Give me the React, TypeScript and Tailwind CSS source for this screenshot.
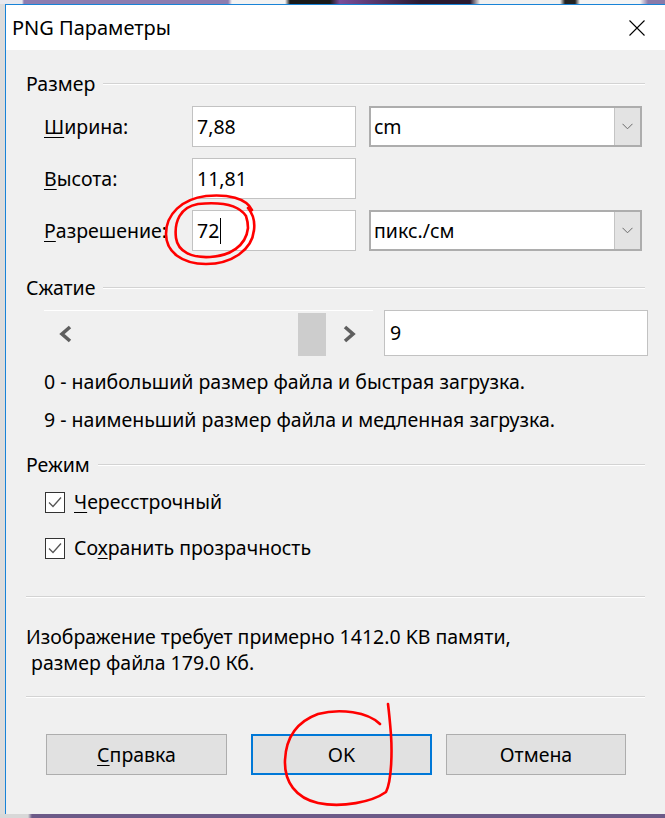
import React from 'react';

function Heading({ title }: { title: string }) {
  return (
    <div className="flex h-[24px] items-center">
      <span>{title}</span>
      <div className="ml-[8px] h-0 flex-1 border-t border-b border-t-[#d3d3d3] border-b-white" />
    </div>
  );
}

function Chevron() {
  return (
    <svg width="11" height="7" viewBox="0 0 11 7">
      <path d="M0.5 0.8 L5.5 5.8 L10.5 0.8" fill="none" stroke="#6a6a6a" strokeWidth="1" />
    </svg>
  );
}

function Combo({ value }: { value: string }) {
  return (
    <div className="flex h-[41px] items-stretch border-2 border-[#adadad] bg-white">
      <span className="flex flex-1 items-center pl-[3px]">{value}</span>
      <div className="flex w-[26px] items-center justify-center border-l border-[#c4c4c4] bg-[#e3e3e3]">
        <Chevron />
      </div>
    </div>
  );
}

function Field({ value, caret }: { value: string; caret?: boolean }) {
  return (
    <div className="flex h-[41px] items-center border border-[#c2c2c2] bg-white pl-[4px]">
      <span>{value}</span>
      {caret && <span className="ml-[1px] h-[26px] w-px bg-black" />}
    </div>
  );
}

function Check({ first, rest }: { first: React.ReactNode; rest: string }) {
  return (
    <div className="flex h-[24px] items-center">
      <div className="flex h-[21px] w-[20px] items-center justify-center border border-[#333] bg-white">
        <svg width="14" height="12" viewBox="0 0 14 12">
          <path d="M1 6.5 L5 10.5 L13 1.5" fill="none" stroke="#555" strokeWidth="1.3" />
        </svg>
      </div>
      <span className="ml-[9px]">
        {first}
        {rest}
      </span>
    </div>
  );
}

export default function App() {
  return (
    <div className="relative flex h-[818px] w-[665px] flex-col overflow-hidden bg-[#e4e4e4] font-['Noto_Sans',sans-serif] text-[19.5px] text-black">
      {/* desktop behind the dialog */}
      <div className="h-[4px] bg-[linear-gradient(90deg,#e8e8ee_0px,#e8e8ee_22px,#8d7db0_24px,#8d7db0_228px,#f2f2f2_232px,#f2f2f2_285px,#1a1a1a_290px,#1a1a1a_330px,#7a4d9a_340px,#2a1a30_420px,#2a1a30_470px,#f0f0f0_480px,#f0f0f0_560px,#222_565px,#222_575px,#f4f4f4_580px,#f4f4f4_640px,#8a7aa8_648px)]" />
      <div className="flex flex-1">
        <div className="w-[5px] bg-[#dcdcdc]" />
        <div className="flex flex-1 flex-col border-l border-t border-[#1883d7]">
          {/* title bar */}
          <div className="flex h-[45px] items-center bg-white pl-[6px] pr-[20px]">
            <span className="text-[20px]">PNG Параметры</span>
            <div className="flex-1" />
            <svg width="16" height="16" viewBox="0 0 16 16">
              <path d="M0.5 0.5 L15.5 15.5 M15.5 0.5 L0.5 15.5" stroke="#000" strokeWidth="1.1" />
            </svg>
          </div>

          {/* body */}
          <div className="flex flex-1 flex-col bg-[#f0f0f0] pl-[20px] pr-[20px] pt-[22px]">
            <Heading title="Размер" />
            <div className="ml-[18px] mr-[3px] mt-[10px] grid grid-cols-[135px_164px_1fr] gap-x-[13px] gap-y-[11px]">
              <div className="flex items-center">
                <span className="underline underline-offset-[3px]">Ш</span>ирина:
              </div>
              <Field value="7,88" />
              <Combo value="cm" />

              <div className="flex items-center">
                <span className="underline underline-offset-[3px]">В</span>ысота:
              </div>
              <Field value="11,81" />
              <div />

              <div className="flex items-center whitespace-nowrap">
                <span className="underline underline-offset-[3px]">Р</span>азрешение:
              </div>
              <Field value="72" caret />
              <Combo value="пикс./см" />
            </div>

            <div className="mt-[25px]">
              <Heading title="Сжатие" />
            </div>
            <div className="ml-[18px] mr-[-3px] mt-[10px] flex">
              <div className="flex h-[46px] w-[329px] items-center border-t border-white">
                <div className="ml-[13px] w-[17px]">
                  <svg width="17" height="18" viewBox="0 0 17 18">
                    <path d="M13 2 L5 9 L13 16" fill="none" stroke="#5f5f5f" strokeWidth="3.6" />
                  </svg>
                </div>
                <div className="flex-1" />
                <div className="h-[43px] w-[28px] self-end bg-[#cdcdcd]" />
                <div className="ml-[15px] w-[17px]">
                  <svg width="17" height="18" viewBox="0 0 17 18">
                    <path d="M4 2 L12 9 L4 16" fill="none" stroke="#5f5f5f" strokeWidth="3.6" />
                  </svg>
                </div>
                <div className="w-[15px]" />
              </div>
              <div className="ml-[11px] flex h-[46px] flex-1 items-center border border-[#c2c2c2] bg-white pl-[5px]">9</div>
            </div>
            <div className="ml-[18px] mt-[14px] flex h-[24px] items-center">0 - наибольший размер файла и быстрая загрузка.</div>
            <div className="ml-[18px] mt-[14px] flex h-[24px] items-center">9 - наименьший размер файла и медленная загрузка.</div>

            <div className="mt-[21px]">
              <Heading title="Режим" />
            </div>
            <div className="ml-[19px] mt-[13px]">
              <Check first={<span className="underline underline-offset-[3px]">Ч</span>} rest="ересстрочный" />
            </div>
            <div className="ml-[19px] mt-[22px]">
              <Check
                first={
                  <>
                    Со<span className="underline underline-offset-[3px]">х</span>
                  </>
                }
                rest="ранить прозрачность"
              />
            </div>

            <div className="mt-[36px] h-0 border-t border-b border-t-[#d3d3d3] border-b-white" />
            <div className="mt-[26px] flex h-[26px] items-center">Изображение требует примерно 1412.0 KB памяти,</div>
            <div className="flex h-[26px] items-center whitespace-pre"> размер файла 179.0 Кб.</div>
            <div className="mt-[20px] h-0 border-t border-b border-t-[#d3d3d3] border-b-white" />

            <div className="ml-[20px] mt-[36px] flex">
              <button className="flex h-[41px] w-[181px] items-center justify-center border border-[#adadad] bg-[#e1e1e1]">
                <span className="underline underline-offset-[3px]">С</span>правка
              </button>
              <button className="ml-[24px] flex h-[41px] w-[181px] items-center justify-center border-2 border-[#0078d7] bg-[#e1e1e1]">
                OK
              </button>
              <button className="ml-[14px] flex h-[41px] w-[180px] items-center justify-center border border-[#adadad] bg-[#e1e1e1]">
                Отмена
              </button>
            </div>
          </div>
        </div>
      </div>
      <div className="h-[4px] bg-[linear-gradient(90deg,#d8d8d8_0px,#d8d8d8_28px,#6c5a88_32px,#6c5a88_100%)]" />

      {/* red hand-drawn annotations */}
      <svg className="pointer-events-none absolute left-0 top-0" width="665" height="818" viewBox="0 0 665 818">
        <g fill="none" stroke="#f00" strokeWidth="2.6" strokeLinecap="round" strokeLinejoin="round">
          <path d="M252 210 C246 198 228 194 206 196 C182 199 166 214 166 234 C166 252 182 264 206 264 C232 264 252 250 254 230 C255 222 253 214 248 208" />
          <path d="M246 216 C238 204 218 202 198 204 C180 207 174 222 176 238 C178 252 192 258 210 257 C230 256 246 246 248 228 C248 222 247 219 246 216" />
          <path d="M380 724 C368 712 340 708 318 714 C296 722 286 738 285 760 C284 782 296 798 318 803 C342 808 372 802 386 792 C392 780 392 750 391 735 C390 722 389 712 388 704" />
        </g>
      </svg>
    </div>
  );
}
